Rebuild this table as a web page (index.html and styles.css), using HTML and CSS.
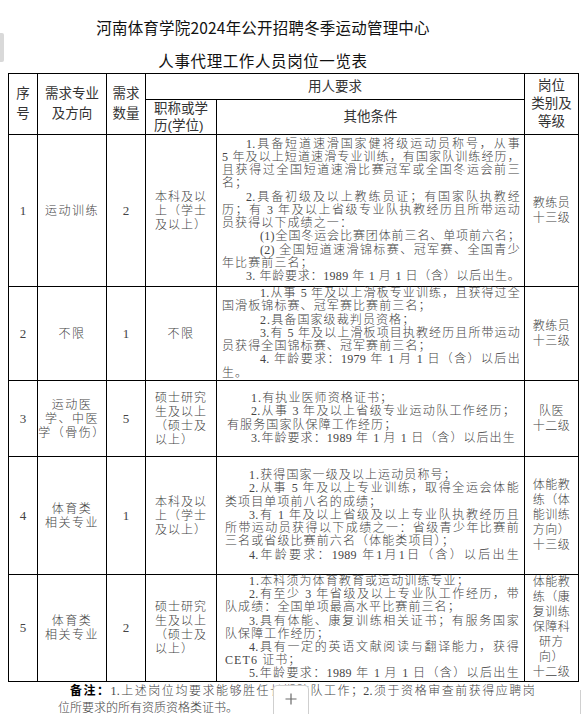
FILE: index.html
```html
<!DOCTYPE html>
<html lang="zh-CN">
<head>
<meta charset="utf-8">
<title>人事代理工作人员岗位一览表</title>
<link rel="stylesheet" href="styles.css">
</head>
<body>
<div class="page">
  <div class="edge-tab"></div>
  <div class="title">
    <div class="t1">河南体育学院2024年公开招聘冬季运动管理中心</div>
    <div class="t2">人事代理工作人员岗位一览表</div>
  </div>
  <table class="posts">
    <colgroup>
      <col class="c-no"><col class="c-major"><col class="c-num"><col class="c-edu"><col class="c-cond"><col class="c-grade">
    </colgroup>
    <thead>
      <tr class="h1">
        <th rowspan="2">序<br>号</th>
        <th rowspan="2">需求专业<br>及方向</th>
        <th rowspan="2">需求<br>数量</th>
        <th colspan="2">用人要求</th>
        <th rowspan="2" class="grade-h">岗位<br>类别及<br>等级</th>
      </tr>
      <tr class="h2">
        <th class="left">职称或学<br>历(学位)</th>
        <th>其他条件</th>
      </tr>
    </thead>
    <tbody>
      <tr class="r1">
        <td class="num">1</td>
        <td class="major">运动训练</td>
        <td class="num">2</td>
        <td class="edu">本科及以<br>上（学士<br>及以上）</td>
        <td class="cond">
          <span class="ln i2 j">1.具备短道速滑国家健将级运动员称号，从事</span>
          <span class="ln j">5 年及以上短道速滑专业训练，有国家队训练经历，</span>
          <span class="ln j">且获得过全国短道速滑比赛冠军或全国冬运会前三</span>
          <span class="ln">名；</span>
          <span class="ln i2 j">2.具备初级及以上教练员证；有国家队执教经</span>
          <span class="ln j">历；有 3 年及以上省级专业队执教经历且所带运动</span>
          <span class="ln">员获得以下成绩之一：</span>
          <span class="ln i3 j">(1)全国冬运会比赛团体前三名、单项前六名；</span>
          <span class="ln i3 j">(2) 全国短道速滑锦标赛、冠军赛、全国青少</span>
          <span class="ln">年比赛前三名；</span>
          <span class="ln i2 j">3. 年龄要求：1989 年 1 月 1 日（含）以后出生。</span>
        </td>
        <td class="grade">教练员<br>十三级</td>
      </tr>
      <tr class="r2">
        <td class="num">2</td>
        <td class="major">不限</td>
        <td class="num">1</td>
        <td class="edu center">不限</td>
        <td class="cond">
          <span class="ln i3 j">1.从事 5 年及以上滑板专业训练，且获得过全</span>
          <span class="ln">国滑板锦标赛、冠军赛比赛前三名；</span>
          <span class="ln i3">2.具备国家级裁判员资格；</span>
          <span class="ln i3 j">3.有 5 年及以上滑板项目执教经历且所带运动</span>
          <span class="ln">员获得全国锦标赛、冠军赛前三名；</span>
          <span class="ln i3 j">4. 年龄要求：1979 年 1 月 1 日（含）以后出</span>
          <span class="ln">生。</span>
        </td>
        <td class="grade">教练员<br>十三级</td>
      </tr>
      <tr class="r3">
        <td class="num">3</td>
        <td class="major">运动医<br>学、中医<br>学（骨伤）</td>
        <td class="num">5</td>
        <td class="edu">硕士研究<br>生及以上<br>（硕士及<br>以上）</td>
        <td class="cond narrow">
          <span class="ln i2">1.有执业医师资格证书；</span>
          <span class="ln i2 j">2.从事 3 年及以上省级专业运动队工作经历；</span>
          <span class="ln">有服务国家队保障工作经历；</span>
          <span class="ln i2 j">3.年龄要求：1989 年 1 月 1 日（含）以后出生</span>
        </td>
        <td class="grade">队医<br>十二级</td>
      </tr>
      <tr class="r4">
        <td class="num">4</td>
        <td class="major">体育类<br>相关专业</td>
        <td class="num">1</td>
        <td class="edu">本科及以<br>上（学士<br>及以上）</td>
        <td class="cond mid">
          <span class="ln i2">1.获得国家一级及以上运动员称号；</span>
          <span class="ln i2 j">2.从事 5 年及以上专业训练，取得全运会体能</span>
          <span class="ln">类项目单项前八名的成绩；</span>
          <span class="ln i2 j">3.有 1 年及以上省级及以上专业队执教经历且</span>
          <span class="ln j">所带运动员获得以下成绩之一：省级青少年比赛前</span>
          <span class="ln">三名或省级比赛前六名（体能类项目）；</span>
          <span class="ln i2 j">4.年龄要求：1989 年1月1日（含）以后出生</span>
        </td>
        <td class="grade">体能教<br>练（体<br>能训练<br>方向）<br>十三级</td>
      </tr>
      <tr class="r5">
        <td class="num">5</td>
        <td class="major">体育类<br>相关专业</td>
        <td class="num">2</td>
        <td class="edu">硕士研究<br>生及以上<br>（硕士及<br>以上）</td>
        <td class="cond mid">
          <span class="ln i2">1.本科须为体育教育或运动训练专业；</span>
          <span class="ln i2 j">2.有至少 3 年省级及以上专业队工作经历，带</span>
          <span class="ln">队成绩：全国单项最高水平比赛前三名；</span>
          <span class="ln i2 j">3.具有体能、康复训练相关证书；有服务国家</span>
          <span class="ln">队保障工作经历；</span>
          <span class="ln i2 j">4.具有一定的英语文献阅读与翻译能力，获得</span>
          <span class="ln">CET6 证书；</span>
          <span class="ln i2 j">5.年龄要求：1989 年 1 月 1 日（含）以后出生</span>
        </td>
        <td class="grade">体能教<br>练（康<br>复训练<br>保障科<br>研方<br>向）<br>十二级</td>
      </tr>
    </tbody>
  </table>
  <div class="note">
    <span class="nl j"><b>备注：</b>1.上述岗位均要求能够胜任长期驻队工作；2.须于资格审查前获得应聘岗</span>
    <span class="nl">位所要求的所有资质资格类证书。</span>
  </div>
  <div class="add-btn">
    <svg width="12" height="12" viewBox="0 0 12 12"><path d="M6 0.5V11.5M0.5 6H11.5" stroke="#6a6a6a" stroke-width="1.2" fill="none"/></svg>
  </div>
  <div class="right-edge"></div>
</div>
</body>
</html>
```

FILE: styles.css
```css
html, body {
  margin: 0;
  padding: 0;
  background: #ffffff;
}

.page {
  position: relative;
  width: 582px;
  height: 714px;
  overflow: hidden;
  padding: 0 0 0 8px;
  box-sizing: border-box;
  font-family: "Liberation Serif", "Noto Sans CJK SC", serif;
  color: #444;
}

.edge-tab {
  position: absolute;
  left: 0;
  top: 33px;
  width: 4px;
  height: 29px;
  background: #d9d9d9;
  border-radius: 0 2px 2px 0;
}

.title {
  width: 510px;
  padding-top: 16px;
  padding-bottom: 2px;
  text-align: center;
  font-family: "Noto Sans CJK SC", sans-serif;
  font-weight: 400;
  color: #111;
}

.t1 {
  font-size: 15.5px;
  line-height: 22px;
  letter-spacing: 0.2px;
}

.t2 {
  margin-top: 11px;
  font-size: 15.5px;
  line-height: 22px;
  letter-spacing: 0.6px;
}

.posts {
  border-collapse: collapse;
  table-layout: fixed;
  width: 570px;
}

.c-no { width: 29px; }
.c-major { width: 69px; }
.c-num { width: 39px; }
.c-edu { width: 71px; }
.c-cond { width: 308px; }
.c-grade { width: 54px; }

.posts th,
.posts td {
  border: 1px solid #000;
  padding: 0;
  vertical-align: middle;
}

.posts th {
  font-family: "Liberation Sans", "Noto Sans CJK SC", sans-serif;
  font-weight: 400;
  font-size: 13.5px;
  line-height: 20px;
  color: #333;
  text-align: center;
}

.posts th.left {
  text-align: left;
  padding-left: 8px;
  line-height: 17px;
}

.posts th.grade-h {
  line-height: 18px;
}

.h1 { height: 26px; }
.h2 { height: 35px; }
.r1 { height: 152px; }
.r2 { height: 94px; }
.r3 { height: 76px; }
.r4 { height: 118px; }
.r5 { height: 106px; }

.posts td {
  font-size: 12px;
  line-height: 14px;
  letter-spacing: 1px;
  font-weight: 300;
}

.posts td.num {
  text-align: center;
  font-size: 13px;
  letter-spacing: 0;
  font-weight: 400;
}

.posts td.major {
  text-align: center;
  letter-spacing: 1.5px;
}

.posts td.edu {
  text-align: left;
  padding-left: 9px;
  letter-spacing: 1px;
}

.posts td.edu.center {
  text-align: center;
  padding-left: 0;
  letter-spacing: 1.5px;
}

.posts td.grade {
  text-align: center;
  line-height: 15px;
  letter-spacing: 0.5px;
}

.posts td.cond {
  padding: 0 4px 0 5px;
  font-size: 12px;
  line-height: 13.2px;
}

.posts td.cond.narrow {
  padding: 0 9px 0 10px;
}

.posts td.cond.mid {
  padding: 0 5px 0 8px;
}

.ln {
  display: block;
  text-align: left;
  white-space: nowrap;
  letter-spacing: 1.1px;
}

.ln.j {
  text-align: justify;
  text-align-last: justify;
  letter-spacing: 0.3px;
}

.ln.i2 { padding-left: 24px; }
.ln.i3 { padding-left: 38px; }

.note {
  width: 477px;
  margin-left: 50px;
  padding-top: 1px;
  font-size: 12px;
  line-height: 17px;
  color: #444;
  font-weight: 300;
}

.note b {
  color: #000;
  font-weight: 700;
}

.nl {
  display: block;
  white-space: nowrap;
}

.nl.j {
  padding-left: 12px;
  text-align: justify;
  text-align-last: justify;
  letter-spacing: 0.3px;
}

.add-btn {
  position: absolute;
  left: 273px;
  top: 685px;
  width: 36px;
  height: 34px;
  box-sizing: border-box;
  border: 1px solid #cfcfcf;
  border-radius: 4px;
  background: #fff;
  display: flex;
  justify-content: center;
  padding-top: 7px;
}

.add-btn svg {
  display: block;
}

.right-edge {
  position: absolute;
  right: 1px;
  top: 690px;
  width: 1px;
  height: 24px;
  background: #d0d0d0;
}
```
